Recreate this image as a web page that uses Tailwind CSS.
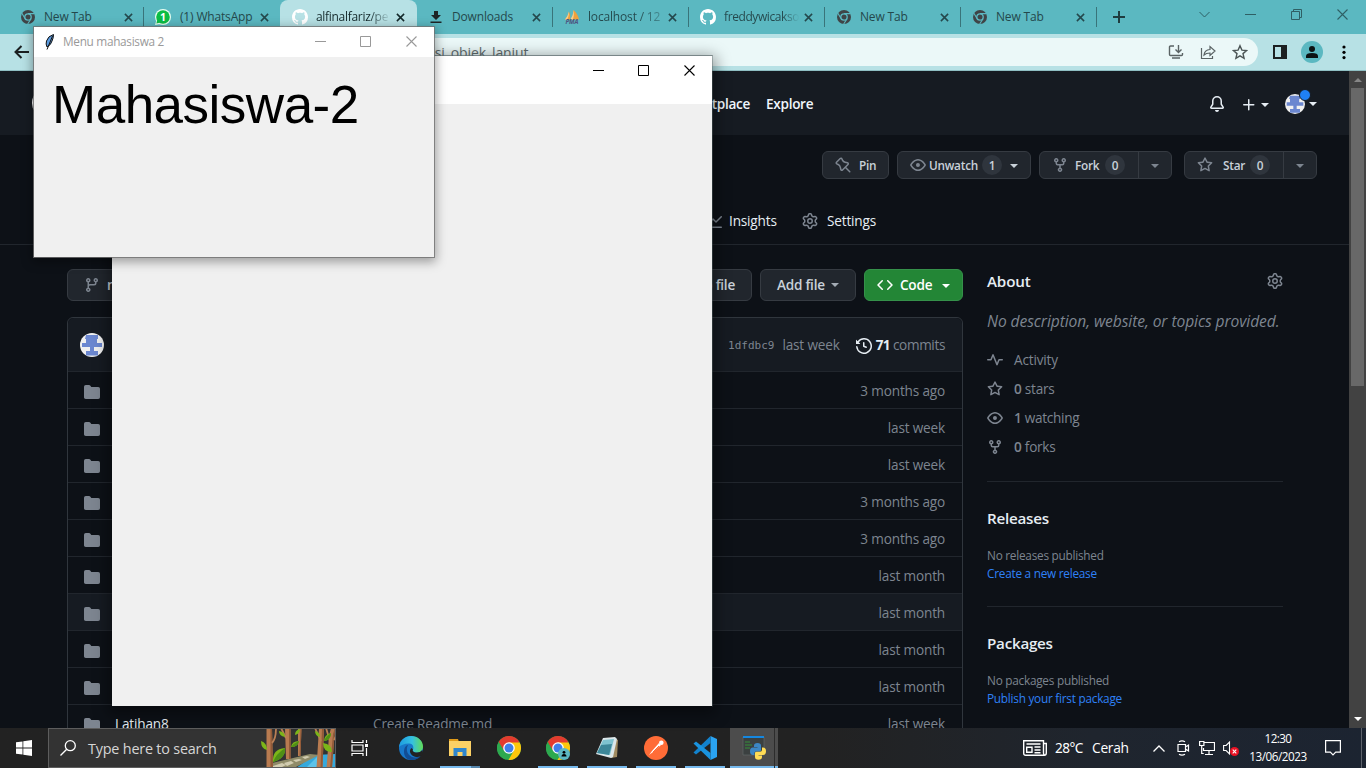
<!DOCTYPE html>
<html lang="en">
<head>
<meta charset="utf-8">
<title>Desktop</title>
<script src="https://cdn.jsdelivr.net/npm/@tailwindcss/browser@4"></script>
</head>
<body class="h-[768px] w-[1366px] overflow-hidden bg-[#0d1117] font-['Open_Sans','Noto_Sans',sans-serif] text-[13.6px] tracking-[-0.17px] text-[#7d8590]">
<svg class="hidden">
  <symbol id="fork" viewBox="0 0 16 16"><path d="M5 5.372v.878c0 .414.336.75.75.75h4.5a.75.75 0 0 0 .75-.75v-.878a2.25 2.25 0 1 1 1.5 0v.878a2.25 2.25 0 0 1-2.25 2.25h-1.5v2.128a2.251 2.251 0 1 1-1.5 0V8.5h-1.5A2.25 2.25 0 0 1 3.5 6.25v-.878a2.25 2.25 0 1 1 1.5 0ZM5 3.25a.75.75 0 1 0-1.5 0 .75.75 0 0 0 1.5 0Zm6.75.75a.75.75 0 1 0 0-1.5.75.75 0 0 0 0 1.5Zm-3 8.75a.75.75 0 1 0-1.5 0 .75.75 0 0 0 1.5 0Z"/></symbol>
  <symbol id="star" viewBox="0 0 16 16"><path d="M8 .25a.75.75 0 0 1 .673.418l1.882 3.815 4.21.612a.75.75 0 0 1 .416 1.279l-3.046 2.97.719 4.192a.751.751 0 0 1-1.088.791L8 12.347l-3.766 1.98a.75.75 0 0 1-1.088-.79l.72-4.194L.818 6.374a.75.75 0 0 1 .416-1.28l4.21-.611L7.327.668A.75.75 0 0 1 8 .25Zm0 2.445L6.615 5.5a.75.75 0 0 1-.564.41l-3.097.45 2.24 2.184a.75.75 0 0 1 .216.664l-.528 3.084 2.769-1.456a.75.75 0 0 1 .698 0l2.77 1.456-.53-3.084a.75.75 0 0 1 .216-.664l2.24-2.183-3.096-.45a.75.75 0 0 1-.564-.41L8 2.694Z"/></symbol>
  <symbol id="eye" viewBox="0 0 16 16"><path d="M8 2c1.981 0 3.671.992 4.933 2.078 1.27 1.091 2.187 2.345 2.637 3.023a1.62 1.62 0 0 1 0 1.798c-.45.678-1.367 1.932-2.637 3.023C11.67 13.008 9.981 14 8 14c-1.981 0-3.671-.992-4.933-2.078C1.797 10.83.88 9.576.43 8.898a1.62 1.62 0 0 1 0-1.798c.45-.677 1.367-1.931 2.637-3.022C4.33 2.992 6.019 2 8 2ZM1.679 7.932a.12.12 0 0 0 0 .136c.411.622 1.241 1.75 2.366 2.717C5.176 11.758 6.527 12.5 8 12.5c1.473 0 2.825-.742 3.955-1.715 1.124-.967 1.954-2.096 2.366-2.717a.12.12 0 0 0 0-.136c-.412-.621-1.242-1.75-2.366-2.717C10.824 4.242 9.473 3.5 8 3.5c-1.473 0-2.825.742-3.955 1.715-1.124.967-1.954 2.096-2.366 2.717ZM8 10a2 2 0 1 1-.001-3.999A2 2 0 0 1 8 10Z"/></symbol>
  <symbol id="folder" viewBox="0 0 16 16"><path d="M1.75 1A1.75 1.75 0 0 0 0 2.75v10.5C0 14.216.784 15 1.75 15h12.5A1.75 1.75 0 0 0 16 13.25v-8.5A1.75 1.75 0 0 0 14.25 3H7.5a.25.25 0 0 1-.2-.1l-.9-1.2C6.07 1.26 5.55 1 5 1H1.75Z"/></symbol>
  <symbol id="gear" viewBox="0 0 16 16"><path d="M8 0a8.2 8.2 0 0 1 .701.031C9.444.095 9.99.645 10.16 1.29l.288 1.107c.018.066.079.158.212.224.231.114.454.243.668.386.123.082.233.09.299.071l1.103-.303c.644-.176 1.392.021 1.82.63.27.385.506.792.704 1.218.315.675.111 1.422-.364 1.891l-.814.806c-.049.048-.098.147-.088.294.016.257.016.515 0 .772-.01.147.038.246.088.294l.814.806c.475.469.679 1.216.364 1.891a7.977 7.977 0 0 1-.704 1.217c-.428.61-1.176.807-1.82.63l-1.102-.302c-.067-.019-.177-.011-.3.071a5.909 5.909 0 0 1-.668.386c-.133.066-.194.158-.211.224l-.29 1.106c-.168.646-.715 1.196-1.458 1.26a8.006 8.006 0 0 1-1.402 0c-.743-.064-1.289-.614-1.458-1.26l-.289-1.106c-.018-.066-.079-.158-.212-.224a5.738 5.738 0 0 1-.668-.386c-.123-.082-.233-.09-.299-.071l-1.103.303c-.644.176-1.392-.021-1.82-.63a8.12 8.12 0 0 1-.704-1.218c-.315-.675-.111-1.422.363-1.891l.815-.806c.05-.048.098-.147.088-.294a6.214 6.214 0 0 1 0-.772c.01-.147-.038-.246-.088-.294l-.815-.806C.635 6.045.431 5.298.746 4.623a7.92 7.92 0 0 1 .704-1.217c.428-.61 1.176-.807 1.82-.63l1.102.302c.067.019.177.011.3-.071.214-.143.437-.272.668-.386.133-.066.194-.158.211-.224l.29-1.106C6.009.645 6.556.095 7.299.03 7.53.01 7.764 0 8 0Zm-.571 1.525c-.036.003-.108.036-.137.146l-.289 1.105c-.147.561-.549.967-.998 1.189-.173.086-.34.183-.5.29-.417.278-.97.423-1.529.27l-1.103-.303c-.109-.03-.175.016-.195.045-.22.312-.412.644-.573.99-.014.031-.021.11.059.19l.815.806c.411.406.562.957.53 1.456a4.709 4.709 0 0 0 0 .582c.032.499-.119 1.05-.53 1.456l-.815.806c-.081.08-.073.159-.059.19.162.346.353.677.573.989.02.03.085.076.195.046l1.102-.303c.56-.153 1.113-.008 1.53.27.161.107.328.204.501.29.447.222.85.629.997 1.189l.289 1.105c.029.109.101.143.137.146a6.6 6.6 0 0 0 1.142 0c.036-.003.108-.036.137-.146l.289-1.105c.147-.561.549-.967.998-1.189.173-.086.34-.183.5-.29.417-.278.97-.423 1.529-.27l1.103.303c.109.029.175-.016.195-.045.22-.313.411-.644.573-.99.014-.031.021-.11-.059-.19l-.815-.806c-.411-.406-.562-.957-.53-1.456a4.709 4.709 0 0 0 0-.582c-.032-.499.119-1.05.53-1.456l.815-.806c.081-.08.073-.159.059-.19a6.464 6.464 0 0 0-.573-.989c-.02-.03-.085-.076-.195-.046l-1.102.303c-.56.153-1.113.008-1.53-.27a4.44 4.44 0 0 0-.501-.29c-.447-.222-.85-.629-.997-1.189l-.289-1.105c-.029-.11-.101-.143-.137-.146a6.6 6.6 0 0 0-1.142 0ZM11 8a3 3 0 1 1-6 0 3 3 0 0 1 6 0ZM9.5 8a1.5 1.5 0 1 0-3.001.001A1.5 1.5 0 0 0 9.5 8Z"/></symbol>
  <symbol id="github" viewBox="0 0 16 16"><path d="M8 0c4.42 0 8 3.58 8 8a8.013 8.013 0 0 1-5.45 7.59c-.4.08-.55-.17-.55-.38 0-.27.01-1.13.01-2.2 0-.75-.25-1.23-.54-1.48 1.78-.2 3.65-.88 3.65-3.95 0-.88-.31-1.59-.82-2.15.08-.2.36-1.02-.08-2.12 0 0-.67-.22-2.2.82-.64-.18-1.32-.27-2-.27-.68 0-1.36.09-2 .27-1.53-1.03-2.2-.82-2.2-.82-.44 1.1-.16 1.92-.08 2.12-.51.56-.82 1.28-.82 2.15 0 3.06 1.86 3.75 3.64 3.95-.23.2-.44.55-.51 1.07-.46.21-1.61.55-2.33-.66-.15-.24-.6-.83-1.23-.82-.67.01-.27.38.01.53.34.19.73.9.82 1.13.16.45.68 1.31 2.69.94 0 .67.01 1.3.01 1.49 0 .21-.15.45-.55.38A7.995 7.995 0 0 1 0 8c0-4.42 3.58-8 8-8Z"/></symbol>
  <symbol id="chromegray" viewBox="0 0 16 16"><circle cx="8" cy="8" r="7" fill="#3f4447"/><circle cx="8" cy="8" r="3.2" fill="none" stroke="#5bb8c1" stroke-width="1.3"/><path d="M8 4.6H14.6M5 9.6L1.9 4.2M11 9.7L7.7 15" stroke="#5bb8c1" stroke-width="1.1"/></symbol>
  <symbol id="close" viewBox="0 0 10 10"><path d="M1 1l8 8M9 1l-8 8" fill="none" stroke="currentColor" stroke-width="1.7"/></symbol>
  <symbol id="winclose" viewBox="0 0 11 11"><path d="M.5.5l10 10M10.5.5l-10 10" fill="none" stroke="currentColor" stroke-width="1.1"/></symbol>
  <symbol id="caret" viewBox="0 0 8 4"><path d="M0 0h8L4 4z"/></symbol>
  <symbol id="identicon" viewBox="0 0 24 24"><circle cx="12" cy="12" r="12" fill="#f0f0f0"/><path d="M6 2h12v4h-1v4h5v4h-8v4h4v4.500H6V18h4v-4H2v-4h4V6H5z" fill="#6b87d0"/></symbol>
  <symbol id="chrome" viewBox="0 0 24 24"><circle cx="12" cy="12" r="12" fill="#2da94f"/><path d="M12 12L1.600 6A12 12 0 0 1 22.400 6z" fill="#e33b2e"/><path d="M12 12V6.500H22.700A12 12 0 0 1 11.500 24L16.800 14.700z" fill="#fdc70c"/><path d="M1.600 6l5.600 9L12 8z" fill="#e33b2e"/><path d="M1.600 6L7 15.200l5 3-3 5.400A12 12 0 0 1 1.600 6z" fill="#2da94f"/><circle cx="12" cy="12" r="5.800" fill="#fff"/><circle cx="12" cy="12" r="4.500" fill="#3f7eea"/></symbol>
</svg>

<main class="relative flex h-[768px] w-[1366px] flex-col overflow-hidden">
  <!-- Browser tabs -->
  <div class="flex h-[34px] shrink-0 bg-[#5bb8c1] pl-2 text-[12px] text-[#24484c]">
    <div class="flex w-[136px] items-center border-r border-transparent pl-3 pr-[10px]"><svg class="size-4 shrink-0"><use href="#chromegray"/></svg><span class="ml-2 flex-1">New Tab</span><svg class="size-[9px]"><use href="#close"/></svg></div>
    <div class="-ml-px flex w-[137px] items-center pr-[11px]"><i class="h-5 w-px bg-[#39747a]"></i>
      <svg class="ml-[11px] size-4 shrink-0" viewBox="0 0 16 16"><circle cx="8" cy="8" r="8" fill="#e9fff1"/><path d="M0 16l1.500-5 4 4z" fill="#e9fff1"/><circle cx="8" cy="8" r="6.800" fill="#0cbd45"/><path d="M1.400 14.600l1-4 3 3z" fill="#0cbd45"/><text x="8" y="12" text-anchor="middle" font-size="10.500" font-weight="700" fill="#fff">1</text></svg>
      <span class="ml-[9px] flex-1 whitespace-nowrap">(1) WhatsApp</span><svg class="size-[9px]"><use href="#close"/></svg></div>
    <div class="flex w-[137px] items-center rounded-t-lg bg-[#b7e1e5] pl-3 pr-3 text-[#14292b]"><svg class="size-4 shrink-0 fill-white"><use href="#github"/></svg><span class="ml-2 w-[76px] whitespace-nowrap bg-linear-to-r from-[#14292b] from-70% to-[#14292b]/10 to-95% bg-clip-text tracking-[-0.3px] text-transparent">alfinalfariz/pe</span><span class="flex-1"></span><svg class="size-[9px]"><use href="#close"/></svg></div>
    <div class="flex w-[135px] items-center pl-[11px] pr-[11px]"><svg class="size-4 shrink-0" viewBox="0 0 16 16"><path d="M6 2h4v4h3l-5 5-5-5h3zM2.500 12.500h11v1.500h-11z" fill="#1d2426"/></svg><span class="ml-2 flex-1">Downloads</span><svg class="size-[9px]"><use href="#close"/></svg></div>
    <div class="flex w-[136px] items-center pr-[11px]"><i class="h-5 w-px bg-[#39747a]"></i>
      <svg class="ml-[11px] size-4 shrink-0" viewBox="0 0 16 16"><path d="M1 10.500Q4 7 5 2.500Q7 6 6 10.500zM6.500 10.500Q9.500 6 9.500 1Q14 5 15 10.500z" fill="#f0a13c"/><path d="M3 10.500Q5 8 5 2.500Q4 7 1 10.500zM9 10.500Q10.500 6 9.500 1Q9.500 6 6.500 10.500z" fill="#f6cf93"/><text x="7.800" y="15.400" text-anchor="middle" font-size="6.200" font-weight="700" font-style="italic" fill="#4e5480">PMA</text></svg>
      <span class="ml-2 w-[76px] whitespace-nowrap bg-linear-to-r from-[#24484c] from-65% to-[#24484c]/30 bg-clip-text text-transparent">localhost / 12</span><span class="flex-1"></span><svg class="size-[9px]"><use href="#close"/></svg></div>
    <div class="flex w-[136px] items-center pr-[11px]"><i class="h-5 w-px bg-[#39747a]"></i><svg class="ml-[11px] size-4 shrink-0 fill-white"><use href="#github"/></svg><span class="ml-2 w-[78px] whitespace-nowrap bg-linear-to-r from-[#24484c] from-75% to-[#24484c]/5 to-95% bg-clip-text tracking-[-0.4px] text-transparent">freddywicakso</span><span class="flex-1"></span><svg class="size-[9px]"><use href="#close"/></svg></div>
    <div class="flex w-[136px] items-center pr-[11px]"><i class="h-5 w-px bg-[#39747a]"></i><svg class="ml-[11px] size-4 shrink-0"><use href="#chromegray"/></svg><span class="ml-2 flex-1">New Tab</span><svg class="size-[9px]"><use href="#close"/></svg></div>
    <div class="flex w-[136px] items-center pr-[11px]"><i class="h-5 w-px bg-[#39747a]"></i><svg class="ml-[11px] size-4 shrink-0"><use href="#chromegray"/></svg><span class="ml-2 flex-1">New Tab</span><svg class="size-[9px]"><use href="#close"/></svg></div>
    <div class="flex flex-1 items-center"><i class="h-5 w-px bg-[#39747a]"></i>
      <svg class="ml-4 size-3" viewBox="0 0 12 12"><path d="M6 0v12M0 6h12" stroke="#1f3c3f" stroke-width="2"/></svg></div>
    <div class="flex h-7 items-center gap-[35px] pr-[18px] text-[#2f5f64]">
      <svg class="size-[11px]" viewBox="0 0 11 11"><path d="M.5 3l5 5 5-5" fill="none" stroke="currentColor"/></svg>
      <svg class="size-[11px]" viewBox="0 0 11 11"><path d="M0 5.500h11" stroke="currentColor"/></svg>
      <svg class="size-[11px]" viewBox="0 0 11 11"><path d="M.5 2.500h8v8h-8zM2.500 2.500v-2h8v8h-2" fill="none" stroke="currentColor"/></svg>
      <svg class="size-[11px]"><use href="#winclose"/></svg>
    </div>
  </div>

  <!-- Toolbar -->
  <div class="flex h-[37px] shrink-0 items-start border-b border-[#8fbfc3] bg-[#b7e1e5] pl-[14px] pt-1">
    <svg class="mt-[7px] h-[14px] w-[15px]" viewBox="0 0 15 14"><path d="M15 7H2M7.500 1l-6 6 6 6" fill="none" stroke="#1b2021" stroke-width="2"/></svg>
    <div class="ml-[85px] flex h-7 w-[1144px] items-center rounded-full bg-[#ebf8f8] pr-[10px] text-[#5f6c6e]">
      <span class="ml-[313px] flex-1 whitespace-nowrap text-[14px] tracking-[-0.1px]">asi_objek_lanjut</span>
      <div class="flex gap-4">
        <svg class="size-4" viewBox="0 0 16 16" fill="none" stroke="#5a6364" stroke-width="1.400"><path d="M6 2H2.500q-1 0-1 1v7.500q0 1 1 1h11q1 0 1-1V9M10.500 1v7M7.500 5.500l3 3 3-3M4 14h8" /></svg>
        <svg class="size-4" viewBox="0 0 16 16" fill="none" stroke="#5a6364" stroke-width="1.200"><path d="M1.500 4v10.500h11V12M4 11q.5-5 6-5.500V2.500L15 7l-5 4.500V9Q6 9 4 11z"/></svg>
        <svg class="size-4" viewBox="0 0 16 16" fill="none" stroke="#4c5556" stroke-width="1.400"><path d="M8 1.700l1.900 4.400 4.700.4-3.600 3.100 1.100 4.700L8 11.800l-4.100 2.500L5 9.600 1.400 6.500l4.700-.4z"/></svg>
      </div>
    </div>
    <svg class="ml-[15px] mt-[7px] h-[14px] w-[14px]" viewBox="0 0 14 14"><path d="M0 0h14v14H0zM2 2v10h6V2z" fill="#1b2021" fill-rule="evenodd"/></svg>
    <svg class="ml-[14px] mt-[3px] size-[22px]" viewBox="0 0 22 22"><circle cx="11" cy="11" r="11" fill="#5bb8c1"/><circle cx="11" cy="8" r="3" fill="#0b1213"/><path d="M5 17v-2q0-3 6-3t6 3v2z" fill="#0b1213"/></svg>
    <svg class="ml-[19px] mt-[7px] h-[15px] w-1" viewBox="0 0 4 15"><circle cx="2" cy="2" r="1.600"/><circle cx="2" cy="7.300" r="1.600"/><circle cx="2" cy="12.600" r="1.600"/></svg>
  </div>

  <!-- Page -->
  <div class="flex h-[657px] shrink-0">
    <div class="flex w-[1349px] flex-col overflow-hidden">
      <header class="flex h-16 shrink-0 items-center bg-[#161b22] pl-8 pr-8 font-semibold text-[#f0f6fc]">
        <svg class="size-8 fill-white"><use href="#github"/></svg>
        <div class="ml-[600px] flex gap-4 pt-[3px] tracking-[-0.3px]"><span class="w-[86px] text-right">Marketplace</span><span>Explore</span></div>
        <div class="ml-auto flex items-center fill-[#e6edf3]">
          <svg class="mt-0.5 size-4" viewBox="0 0 16 16"><path d="M8 16a2 2 0 0 0 1.985-1.750c.017-.137-.097-.25-.235-.25h-3.500c-.138 0-.252.113-.235.25A2 2 0 0 0 8 16ZM3 5a5 5 0 0 1 10 0v2.947c0 .05.015.098.042.139l1.703 2.555A1.519 1.519 0 0 1 13.482 13H2.518a1.516 1.516 0 0 1-1.263-2.360l1.703-2.554A.255.255 0 0 0 3 7.947Zm5-3.500A3.500 3.500 0 0 0 4.500 5v2.947c0 .346-.102.683-.294.97l-1.703 2.556-.001.016.012.011h10.964l.013-.011-.001-.017-1.703-2.554a1.745 1.745 0 0 1-.294-.97V5A3.500 3.500 0 0 0 8 1.500Z"/></svg>
          <svg class="ml-4 mt-1 size-4" viewBox="0 0 16 16"><path d="M7.750 2a.75.75 0 0 1 .75.75V7h4.250a.75.75 0 0 1 0 1.500H8.500v4.250a.75.75 0 0 1-1.500 0V8.500H2.750a.75.75 0 0 1 0-1.500H7V2.750A.75.75 0 0 1 7.750 2Z"/></svg>
          <svg class="ml-1 mt-1 h-1 w-2"><use href="#caret"/></svg>
          <span class="relative ml-4 mt-0.5 size-5"><svg class="size-5"><use href="#identicon"/></svg><i class="absolute -top-[5px] left-[14px] size-[12px] rounded-full border border-[#161b22] bg-[#1f80f5]"></i></span>
          <svg class="ml-1 mt-0.5 h-1 w-2"><use href="#caret"/></svg>
        </div>
      </header>

      <div class="flex h-[110px] shrink-0 flex-col justify-between border-b border-[#21262d] pt-4">
        <div class="flex h-7 justify-end pr-8 text-[11.800px] font-semibold tracking-[-0.25px] text-[#c9d1d9]">
          <div class="mr-2 flex w-[67px] items-center rounded-md border border-[#363b42] bg-[#21262d] pl-3"><svg class="size-4 -scale-x-100 fill-[#7d8590]" viewBox="0 0 16 16"><path d="m11.294.984 3.722 3.722a1.750 1.750 0 0 1-.504 2.826l-1.327.613a3.089 3.089 0 0 0-1.707 2.084l-.584 2.454c-.317 1.332-1.972 1.800-2.940.832L5.750 11.311 1.780 15.280a.749.749 0 1 1-1.060-1.060l3.969-3.970-2.204-2.204c-.968-.968-.5-2.623.832-2.940l2.454-.584a3.080 3.080 0 0 0 2.084-1.707l.613-1.327a1.750 1.750 0 0 1 2.826-.504ZM6.283 9.723l2.732 2.731a.25.25 0 0 0 .42-.119l.584-2.454a4.586 4.586 0 0 1 2.537-3.098l1.328-.613a.25.25 0 0 0 .072-.404l-3.722-3.722a.25.25 0 0 0-.404.072l-.613 1.328a4.584 4.584 0 0 1-3.098 2.537l-2.454.584a.25.25 0 0 0-.119.42l2.731 2.732Z"/></svg><span class="ml-2 pt-px">Pin</span></div>
          <div class="mr-2 flex w-[134px] items-center rounded-md border border-[#363b42] bg-[#21262d] pl-3"><svg class="size-4 fill-[#7d8590]"><use href="#eye"/></svg><span class="ml-[3px] w-[48px] pt-px">Unwatch</span><span class="ml-[5px] flex size-5 items-center justify-center rounded-full bg-[#2f353d] pt-px">1</span><svg class="ml-2 mt-0.5 h-1 w-2 fill-[#c9d1d9]"><use href="#caret"/></svg></div>
          <div class="mr-3 flex w-[133px] items-center rounded-md border border-[#363b42] bg-[#21262d] pl-3"><svg class="size-4 fill-[#7d8590]"><use href="#fork"/></svg><span class="ml-[7px] w-[25px] pt-px">Fork</span><span class="ml-[5px] flex size-5 items-center justify-center rounded-full bg-[#2f353d] pt-px">0</span><span class="ml-auto flex h-full w-[33px] items-center justify-center border-l border-[#363b42]"><svg class="mt-0.5 h-1 w-2 fill-[#7d8590]"><use href="#caret"/></svg></span></div>
          <div class="flex w-[133px] items-center rounded-md border border-[#363b42] bg-[#21262d] pl-3"><svg class="size-4 fill-[#7d8590]"><use href="#star"/></svg><span class="ml-[10px] w-[23px] pt-px">Star</span><span class="ml-1 flex size-5 items-center justify-center rounded-full bg-[#2f353d] pt-px">0</span><span class="ml-auto flex h-full w-[33px] items-center justify-center border-l border-[#363b42]"><svg class="mt-0.5 h-1 w-2 fill-[#7d8590]"><use href="#caret"/></svg></span></div>
        </div>
        <div class="flex h-[47px] items-center pl-[706px] text-[#e6edf3]">
          <svg class="size-4 fill-[#7d8590]" viewBox="0 0 16 16"><path d="M1.500 1.750V13.500h13.750a.75.75 0 0 1 0 1.500H.75a.75.75 0 0 1-.75-.75V1.750a.75.75 0 0 1 1.500 0Zm14.280 2.530-5.250 5.250a.75.75 0 0 1-1.060 0L7 7.060 4.280 9.780a.75.75 0 0 1-1.060-1.060l3.250-3.250a.75.75 0 0 1 1.060 0L10 7.940l4.720-4.720a.75.75 0 1 1 1.060 1.060Z"/></svg>
          <span class="ml-[7px] w-[49px] pt-0.5">Insights</span>
          <svg class="ml-6 size-4 fill-[#7d8590]"><use href="#gear"/></svg>
          <span class="ml-[9px] pt-0.5">Settings</span>
        </div>
      </div>

      <div class="flex flex-1 overflow-hidden pl-[67px] pt-6">
        <!-- Files -->
        <div class="flex w-[896px] shrink-0 flex-col">
          <div class="flex h-8 shrink-0 font-semibold tracking-[-0.25px] text-[#c9d1d9]">
            <div class="flex w-[110px] items-center rounded-md border border-[#363b42] bg-[#21262d] pl-4"><svg class="size-4 fill-[#7d8590]" viewBox="0 0 16 16"><path d="M9.500 3.250a2.250 2.250 0 1 1 3 2.122V6A2.500 2.500 0 0 1 10 8.500H6a1 1 0 0 0-1 1v1.128a2.251 2.251 0 1 1-1.500 0V5.372a2.250 2.250 0 1 1 1.500 0v1.836A2.493 2.493 0 0 1 6 7h4a1 1 0 0 0 1-1v-.628A2.250 2.250 0 0 1 9.500 3.250Zm-6 0a.75.75 0 1 0 1.500 0 .75.75 0 0 0-1.500 0Zm8.250-.75a.75.75 0 1 0 0 1.500.75.75 0 0 0 0-1.500ZM4.250 12a.75.75 0 1 0 0 1.500.75.75 0 0 0 0-1.500Z"/></svg><span class="ml-[7px] pt-px">main</span></div>
            <div class="ml-auto flex w-[97px] items-center justify-end rounded-md border border-[#363b42] bg-[#21262d] pr-4 pt-px">Go to file</div>
            <div class="ml-2 flex w-24 items-center rounded-md border border-[#363b42] bg-[#21262d] pl-4"><span class="w-[50px] whitespace-nowrap pt-px">Add file</span><svg class="ml-1 h-1 w-2 fill-[#a3abb4]"><use href="#caret"/></svg></div>
            <div class="ml-2 flex w-[99px] items-center rounded-md border border-[#35914a] bg-[#238636] fill-white pl-3 text-white"><svg class="size-4" viewBox="0 0 16 16"><path d="m11.280 3.220 4.250 4.250a.75.75 0 0 1 0 1.060l-4.250 4.250a.749.749 0 0 1-1.275-.326.749.749 0 0 1 .215-.734L13.940 8l-3.720-3.720a.749.749 0 0 1 .326-1.275.749.749 0 0 1 .734.215Zm-6.560 0a.751.751 0 0 1 1.042.018.751.751 0 0 1 .018 1.042L2.060 8l3.720 3.720a.749.749 0 0 1-.326 1.275.749.749 0 0 1-.734-.215L.47 8.530a.75.75 0 0 1 0-1.060Z"/></svg><span class="ml-[7px] w-[34px] pt-px">Code</span><svg class="ml-2 mt-0.5 h-1 w-2"><use href="#caret"/></svg></div>
          </div>
          <div class="mt-4 flex flex-col rounded-t-md border border-[#30363d]">
            <div class="flex h-[53px] items-center rounded-t-md bg-[#161b22] pl-3 pr-[17px]">
              <svg class="size-6"><use href="#identicon"/></svg>
              <span class="ml-auto pt-[3px] font-['DejaVu_Sans_Mono',monospace] text-[11px] tracking-normal">1dfdbc9</span>
              <span class="ml-2 pt-0.5">last week</span>
              <svg class="ml-4 mt-0.5 size-4 fill-[#e6edf3]" viewBox="0 0 16 16"><path d="m.427 1.927 1.215 1.215a8.002 8.002 0 1 1-1.600 5.685.75.75 0 1 1 1.493-.154 6.500 6.500 0 1 0 1.180-4.458l1.358 1.358A.25.25 0 0 1 3.896 6H.25A.25.25 0 0 1 0 5.750V2.104a.25.25 0 0 1 .427-.177ZM7.750 4a.75.75 0 0 1 .75.75v2.992l2.028.812a.75.75 0 0 1-.557 1.392l-2.500-1A.751.751 0 0 1 7 8.250v-3.500A.75.75 0 0 1 7.750 4Z"/></svg>
              <span class="ml-1 pt-0.5 tracking-[-0.37px]"><b class="tracking-[-0.7px] text-[#e6edf3]">71</b> commits</span>
            </div>
            <div class="flex h-[37px] items-center justify-between border-t border-[#21262d] pl-4 pr-[17px] pt-0.5"><svg class="mt-0.5 size-4 fill-[#7d8590]"><use href="#folder"/></svg><span>3 months ago</span></div>
            <div class="flex h-[37px] items-center justify-between border-t border-[#21262d] pl-4 pr-[17px] pt-0.5"><svg class="mt-0.5 size-4 fill-[#7d8590]"><use href="#folder"/></svg><span>last week</span></div>
            <div class="flex h-[37px] items-center justify-between border-t border-[#21262d] pl-4 pr-[17px] pt-0.5"><svg class="mt-0.5 size-4 fill-[#7d8590]"><use href="#folder"/></svg><span>last week</span></div>
            <div class="flex h-[37px] items-center justify-between border-t border-[#21262d] pl-4 pr-[17px] pt-0.5"><svg class="mt-0.5 size-4 fill-[#7d8590]"><use href="#folder"/></svg><span>3 months ago</span></div>
            <div class="flex h-[37px] items-center justify-between border-t border-[#21262d] pl-4 pr-[17px] pt-0.5"><svg class="mt-0.5 size-4 fill-[#7d8590]"><use href="#folder"/></svg><span>3 months ago</span></div>
            <div class="flex h-[37px] items-center justify-between border-t border-[#21262d] pl-4 pr-[17px] pt-0.5"><svg class="mt-0.5 size-4 fill-[#7d8590]"><use href="#folder"/></svg><span>last month</span></div>
            <div class="flex h-[37px] items-center justify-between border-t border-[#21262d] bg-[#161b22] pl-4 pr-[17px] pt-0.5"><svg class="mt-0.5 size-4 fill-[#7d8590]"><use href="#folder"/></svg><span>last month</span></div>
            <div class="flex h-[37px] items-center justify-between border-t border-[#21262d] pl-4 pr-[17px] pt-0.5"><svg class="mt-0.5 size-4 fill-[#7d8590]"><use href="#folder"/></svg><span>last month</span></div>
            <div class="flex h-[37px] items-center justify-between border-t border-[#21262d] pl-4 pr-[17px] pt-0.5"><svg class="mt-0.5 size-4 fill-[#7d8590]"><use href="#folder"/></svg><span>last month</span></div>
            <div class="flex h-[37px] items-center border-t border-[#21262d] pl-4 pr-[17px] pt-0.5"><svg class="mt-0.5 size-4 fill-[#7d8590]"><use href="#folder"/></svg><span class="ml-[15px] w-[258px] text-[#e6edf3]">Latihan8</span><span>Create Readme.md</span><span class="ml-auto">last week</span></div>
          </div>
        </div>
        <!-- Sidebar -->
        <aside class="ml-6 flex w-[296px] shrink-0 flex-col">
          <div class="flex h-6 items-center justify-between text-[15.200px] font-semibold text-[#e6edf3]"><span class="pt-px">About</span><svg class="size-4 fill-[#7d8590]"><use href="#gear"/></svg></div>
          <p class="mt-4 h-6 whitespace-nowrap text-[15.600px] italic leading-6 tracking-[-0.08px]">No description, website, or topics provided.</p>
          <div class="mt-4 flex flex-col gap-2 leading-[21px]">
            <div class="flex h-[21px] items-center"><svg class="mr-[11px] mt-px size-4 fill-[#7d8590]" viewBox="0 0 16 16"><path d="M6 2c.306 0 .582.187.696.471L10 10.731l1.304-3.260A.751.751 0 0 1 12 7h3.250a.75.75 0 0 1 0 1.500h-2.742l-1.812 4.528a.751.751 0 0 1-1.392 0L6 4.770 4.696 8.030A.75.75 0 0 1 4 8.500H.75a.75.75 0 0 1 0-1.500h2.742l1.812-4.529A.751.751 0 0 1 6 2Z"/></svg><span>Activity</span></div>
            <div class="flex h-[21px] items-center"><svg class="mr-[11px] mt-px size-4 fill-[#7d8590]"><use href="#star"/></svg><span class="tracking-[-0.25px]"><b class="font-semibold">0</b> stars</span></div>
            <div class="flex h-[21px] items-center"><svg class="mr-[11px] mt-px size-4 fill-[#7d8590]"><use href="#eye"/></svg><span class="tracking-[-0.3px]"><b class="font-semibold">1</b> watching</span></div>
            <div class="flex h-[21px] items-center"><svg class="mr-[11px] mt-px size-4 fill-[#7d8590]"><use href="#fork"/></svg><span class="tracking-[-0.25px]"><b class="font-semibold">0</b> forks</span></div>
          </div>
          <div class="mt-6 border-t border-[#21262d] pt-6 text-[11.800px] leading-[18px] tracking-[-0.25px]">
            <h2 class="text-[15.200px] font-semibold leading-6 tracking-[-0.25px] text-[#e6edf3]">Releases</h2>
            <p class="mt-4">No releases published</p><p class="text-[#2f81f7]">Create a new release</p>
          </div>
          <div class="mt-6 border-t border-[#21262d] pt-6 text-[11.800px] leading-[18px] tracking-[-0.25px]">
            <h2 class="text-[15.200px] font-semibold leading-6 tracking-[-0.25px] text-[#e6edf3]">Packages</h2>
            <p class="mt-4">No packages published</p><p class="text-[#2f81f7]">Publish your first package</p>
          </div>
        </aside>
      </div>
    </div>
    <!-- Scrollbar -->
    <div class="flex w-[17px] flex-col items-center bg-[#424242]">
      <svg class="mt-[7px] h-1 w-2 rotate-180 fill-[#868686]"><use href="#caret"/></svg>
      <i class="mt-[6px] h-[298px] w-[13px] bg-[#686868]"></i>
      <svg class="mb-[7px] mt-auto h-1 w-2 fill-white"><use href="#caret"/></svg>
    </div>
  </div>

  <!-- Taskbar -->
  <div class="flex h-10 shrink-0 bg-linear-to-r from-[#222222] from-60% via-[#1f252e] via-80% to-[#1c2431]">
    <div class="flex w-12 items-center justify-center"><svg class="size-4" viewBox="0 0 16 16"><path d="M0 2.300L6.500 1.400V7.600H0zM7.300 1.300L16 0v7.600H7.300zM0 8.400h6.500v6.200L0 13.700zM7.300 8.400H16V16l-8.700-1.300z" fill="#fff"/></svg></div>
    <div class="flex w-72 items-center overflow-hidden border border-[#5d5d5d] bg-[#333] pl-[11px] text-[14.400px] tracking-[-0.2px] text-[#d6d6d6]">
      <svg class="size-4" viewBox="0 0 16 16" fill="none" stroke="#fff" stroke-width="1.300"><circle cx="10.300" cy="5.700" r="5"/><path d="M6.700 9.300L.5 15.500"/></svg>
      <span class="ml-3 whitespace-nowrap pt-0.5">Type here to search</span>
      <!-- Forest path illustration -->
      <svg class="-mr-px ml-auto h-10 w-[76px] shrink-0" viewBox="0 0 76 40">
        <path d="M36 40l18-13 22-1v14z" fill="#35a9dc"/><path d="M46 40l12-12h5l-7 12z" fill="#5cc3ea"/>
        <path d="M12 35l38-9 9 1-25 13H10z" fill="#8f8b68"/>
        <path d="M13 38l9-3 4 2-6 3h-7zM24 35l7-2 3 2-7 3zM33 32l6-1 3 1-6 2zM42 29l5-1 3 1-5 2z" fill="#d2ccb0"/>
        <path d="M6.500 0h5.500l1 40H6.500zM25 0h5.500v31H26zM38 0h3.500l-1 28H38zM59 0h5l-1.500 40h-6zM69 8l2-8h4l-3 40h-5.500z" fill="#b87b50"/>
        <path d="M10.500 0H12l1 40h-2.500zM29 0h1.500v31H29zM40.500 0h1l-1 28h-1zM62 0h2l-1.500 40h-2zM73 6l2-6-3 40h-2z" fill="#925a38"/>
        <path d="M12 15Q16 11 16 0M26 10L21 0M61 13L55 0M70 13L66 0M74 12L76 8" stroke="#b97f55" stroke-width="1.800" fill="none"/>
        <path d="M13 34Q12 21 25 20q1 10-12 14zM1 13q0 8 6 9 0-7-6-9zM19 3q0 5 6 6 0-5-6-6zM31 19q1-6 8-6-1 6-8 6zM35 7q0-5 5-6 0 5-5 6zM55 3q0 5 5 6 0-5-5-6zM64 13q0-6 7-8 0 7-7 8zM63 15q0 9 9 9 0-8-9-9z" fill="#7cb518"/>
        <path d="M13 34Q16 26 25 20q1 10-12 14zM31 19q3-4 8-6-1 6-8 6zM64 13q2-5 7-8 0 7-7 8z" fill="#4f8f16"/>
      </svg>
    </div>
    <div class="flex w-[51px] items-center justify-center pr-[3px]"><svg class="h-4 w-[18px]" viewBox="0 0 18 16" fill="none" stroke="#fff" stroke-width="1.200"><path d="M1 0v2.500h11V0M1 16v-2.500h11V16M1 5h11v6H1zM15.500 0v3M15.500 8v8"/><path d="M14 4h3v3h-3z" fill="#fff" stroke="none"/></svg></div>
    <div class="flex gap-[1px]">
      <div class="flex w-12 items-center justify-center"><svg class="size-6" viewBox="0 0 24 24"><defs><linearGradient id="eg" x1="0" x2="1"><stop offset="0" stop-color="#1d9be0"/><stop offset=".55" stop-color="#35c1e0"/><stop offset="1" stop-color="#62dd55"/></linearGradient></defs><circle cx="12" cy="12" r="12" fill="#1877c9"/><path d="M0 11C1 4 6 0 12 0c7 0 12 5 12 10.500 0 4-3 6-6 6-3.500 0-5-1.500-4-3 .8-1.200.7-6-4-6-5 0-8.500 2-10 3.500z" fill="url(#eg)"/><path d="M14 13.500c-1 1.500.5 3 4 3 2 0 4-.8 5.200-2.500l.8 3-2.500 3.500C17 22 12 20 11 16c-.3-2 .5-3 1.500-4z" fill="#222"/><path d="M9 9c-3 5 0 12 7 12.500 2.500.2 4.500-.7 6-1.700C19 24 14 24.500 10 23.800 3 21 4 10 9 9z" fill="#124d94"/></svg></div>
      <div class="relative flex w-12 items-center justify-center"><svg class="h-5 w-[22px]" viewBox="0 0 22 20"><path d="M0 1h9l1 3H0z" fill="#e09b19"/><path d="M0 3h22v15H0z" fill="#fcd165"/><path d="M4.500 18v-8h13v8h-4v-4h-5v4z" fill="#2f86cd"/></svg><i class="absolute bottom-0 left-1 h-[2px] w-[31px] bg-[#76b9ed]"></i><i class="absolute bottom-0 left-[35px] h-[2px] w-[9px] bg-[#5585ab]"></i></div>
      <div class="flex w-12 items-center justify-center"><svg class="size-6"><use href="#chrome"/></svg></div>
      <div class="relative flex w-12 items-center justify-center"><svg class="size-6"><use href="#chrome"/></svg><svg class="absolute left-[24px] top-5 size-3" viewBox="0 0 12 12"><circle cx="6" cy="6" r="6" fill="#5bb8c1"/><circle cx="6" cy="4.300" r="1.400"/><path d="M3.500 8.500q0-2.500 2.500-2.500t2.500 2.500z"/></svg><i class="absolute bottom-0 left-1 h-[2px] w-10 bg-[#76b9ed]"></i></div>
      <div class="relative flex w-12 items-center justify-center"><svg class="size-6" viewBox="0 0 24 24"><path d="M19 2l4 2-1 17-6 1z" fill="#a08a60"/><path d="M8 2l12-1 2 2-4 18-2 1-15-4z" fill="#dce7ea"/><path d="M8 4l11-1-4 16-13-2z" fill="#7fc3d0"/><path d="M2 17l4-8 11-1-3 11z" fill="#3d8799"/></svg><i class="absolute bottom-0 left-1 h-[2px] w-10 bg-[#76b9ed]"></i></div>
      <div class="relative flex w-12 items-center justify-center"><svg class="size-6" viewBox="0 0 24 24"><circle cx="12" cy="12" r="12" fill="#ff6c37"/><path d="M5 19l3-4 7-8 2 2-8 7z" fill="#fff"/><circle cx="17.300" cy="6.700" r="2.300" fill="#fff"/><path d="M9 16l6-6" stroke="#ff6c37"/></svg><i class="absolute bottom-0 left-1 h-[2px] w-10 bg-[#76b9ed]"></i></div>
      <div class="relative flex w-12 items-center justify-center"><svg class="size-6" viewBox="0 0 24 24"><path d="M17.500 0L24 3v18l-6.500 3z" fill="#2aa3f2"/><path d="M17.500 0v7L3 18.500.5 16.500z" fill="#1282cd"/><path d="M17.500 24v-7L3 5.500.5 7.500z" fill="#1a93df"/></svg><i class="absolute bottom-0 left-1 h-[2px] w-10 bg-[#76b9ed]"></i></div>
      <div class="relative flex w-12 items-center justify-center bg-[#4c4c4c]"><svg class="size-6" viewBox="0 0 24 24"><path d="M1 1h21v18H1z" fill="#3b4040" stroke="#676b6b" stroke-width=".6"/><path d="M1 0h21v2H1z" fill="#1587e0"/><path d="M3 6h5M3 9h7M3 12h5" stroke="#39753b" stroke-width="1.400"/><path d="M12 11V9.500Q12 7 15.500 7T19 9.500V14q0 1.500-1.500 1.500H14Q12.500 15.500 12.500 17v2H11Q8 19 8 15.200T11 11.500h4.500V11z" fill="#3c86c4"/><path d="M20 11.500h1q3 0 3 3.700T21 19h-4.500v.5H20V21q0 2.700-3.500 2.700T13 21v-4q0-1.200 1.500-1.200H18q2 0 2-1.800z" fill="#ffdc55"/></svg><i class="absolute bottom-0 left-0 h-[2px] w-full bg-[#76b9ed]"></i><i class="absolute right-[3px] top-0 h-full w-px bg-[#2c2c2c]"></i></div>
    </div>
    <div class="ml-auto flex items-center text-[13.800px] tracking-[-0.2px] text-white">
      <svg class="h-4 w-6" viewBox="0 0 24 16" fill="none" stroke="#fff" stroke-width="1.400"><path d="M20.500 3.500h2.800V13q0 2.300-2 2.300H2.700q-2 0-2-2V.7h19.800V13q0 2 1.300 2.200M3.500 4h14M11.500 7h6M11.500 10h6M11.500 12.700h6M3.700 7.200H9v5H3.700z"/></svg>
      <span class="ml-2 w-[30px] whitespace-nowrap font-['Noto_Sans',sans-serif] text-[13.600px] tracking-[-0.55px]">28°C</span><span class="ml-[7px] w-[37px] tracking-[-0.3px]">Cerah</span>
      <svg class="ml-6 h-[7px] w-3" viewBox="0 0 12 7"><path d="M.5 6.500L6 1l5.500 5.500" fill="none" stroke="#fff" stroke-width="1.300"/></svg>
      <svg class="ml-3 h-4 w-[13px]" viewBox="0 0 13 16" fill="none" stroke="#fff" stroke-width="1.200"><path d="M1 4.500h7.500v7H1zM8.500 7l3-2v6l-3-2M2 1.800q3-1.800 6 0M2 14.200q3 1.800 6 0"/></svg>
      <svg class="ml-[9px] h-4 w-4" viewBox="0 0 16 16" fill="none" stroke="#fff" stroke-width="1.200"><path d="M5 2.500h10.500v8H4.500V8M10 10.500V14M6 14.500h8M.6 1.500h4.300v4H.6zM2.700 5.500v8h2"/></svg>
      <svg class="ml-2 h-4 w-4" viewBox="0 0 16 16"><path d="M.6 5.500h2.500L6.500 2v12L3.100 10.500H.6z" fill="none" stroke="#fff" stroke-width="1.100"/><circle cx="11.500" cy="11.500" r="4.500" fill="#e81123"/><path d="M9.700 9.700l3.600 3.600M13.300 9.700l-3.600 3.600" stroke="#fff" stroke-width="1.100"/></svg>
      <div class="ml-[9px] w-[60px] whitespace-nowrap pb-0.5 text-center text-[11.700px] leading-[18px] tracking-[-0.45px]"><div class="tracking-[-0.600px]">12:30</div><div>13/06/2023</div></div>
      <svg class="ml-[17px] size-4" viewBox="0 0 16 16"><path d="M.6.6h14.800v11.600h-4.700L8 15l-2.700-2.800H.6z" fill="none" stroke="#fff" stroke-width="1.200"/></svg>
      <i class="ml-5 mr-1 h-10 w-px bg-[#5d626b]"></i>
    </div>
  </div>

  <!-- Back window -->
  <section class="absolute left-[111px] top-[55px] h-[652px] w-[602px] border border-[#5d6b6d]/70 border-b-transparent border-l-transparent border-r-[#5d6b6d]/40 bg-[#f0f0f0] bg-clip-padding shadow-[0_4px_14px_3px_rgba(0,0,0,0.4)]">
    <div class="flex h-12 items-start justify-end gap-[34px] bg-white pr-[17px] pt-[9px] text-black">
      <svg class="h-[11px] w-[11px]" viewBox="0 0 11 11"><path d="M0 5.500h11" stroke="currentColor"/></svg>
      <svg class="h-[11px] w-[11px]" viewBox="0 0 11 11"><path d="M.5.5h10v10H.5z" fill="none" stroke="currentColor"/></svg>
      <svg class="ml-px h-[11px] w-[11px]"><use href="#winclose"/></svg>
    </div>
  </section>

  <!-- Front window -->
  <section class="absolute left-[33px] top-[26px] h-[232px] w-[402px] border border-[#707070]/80 bg-[#f0f0f0] bg-clip-padding shadow-[0_3px_10px_1px_rgba(0,0,0,0.35)]">
    <div class="flex h-[30px] items-center bg-white pl-[10px] pr-[17px] text-[11.800px] tracking-[-0.3px] text-[#999]">
      <svg class="h-4 w-3" viewBox="0 0 12 16"><path d="M9.500.5Q4 2 2.500 7 1.500 10 3 13q4-2 5-6Q9.500 4 9.500.5z" fill="#5b9be0" stroke="#111"/><path d="M8.500 2L3 15.500" stroke="#111"/></svg>
      <span class="ml-[7px] whitespace-nowrap">Menu mahasiswa 2</span>
      <div class="mb-[2px] ml-auto flex gap-[34px]">
        <svg class="h-[11px] w-[11px]" viewBox="0 0 11 11"><path d="M0 5.500h11" stroke="currentColor"/></svg>
        <svg class="h-[11px] w-[11px]" viewBox="0 0 11 11"><path d="M.5.5h10v10H.5z" fill="none" stroke="currentColor"/></svg>
        <svg class="ml-px h-[11px] w-[11px]"><use href="#winclose"/></svg>
      </div>
    </div>
    <div class="pl-[18px] pt-[18px] font-['Liberation_Sans',Arial,sans-serif] text-[53px] leading-[60px] tracking-[-0.5px] text-black">Mahasiswa-2</div>
  </section>
</main>
</body>
</html>
